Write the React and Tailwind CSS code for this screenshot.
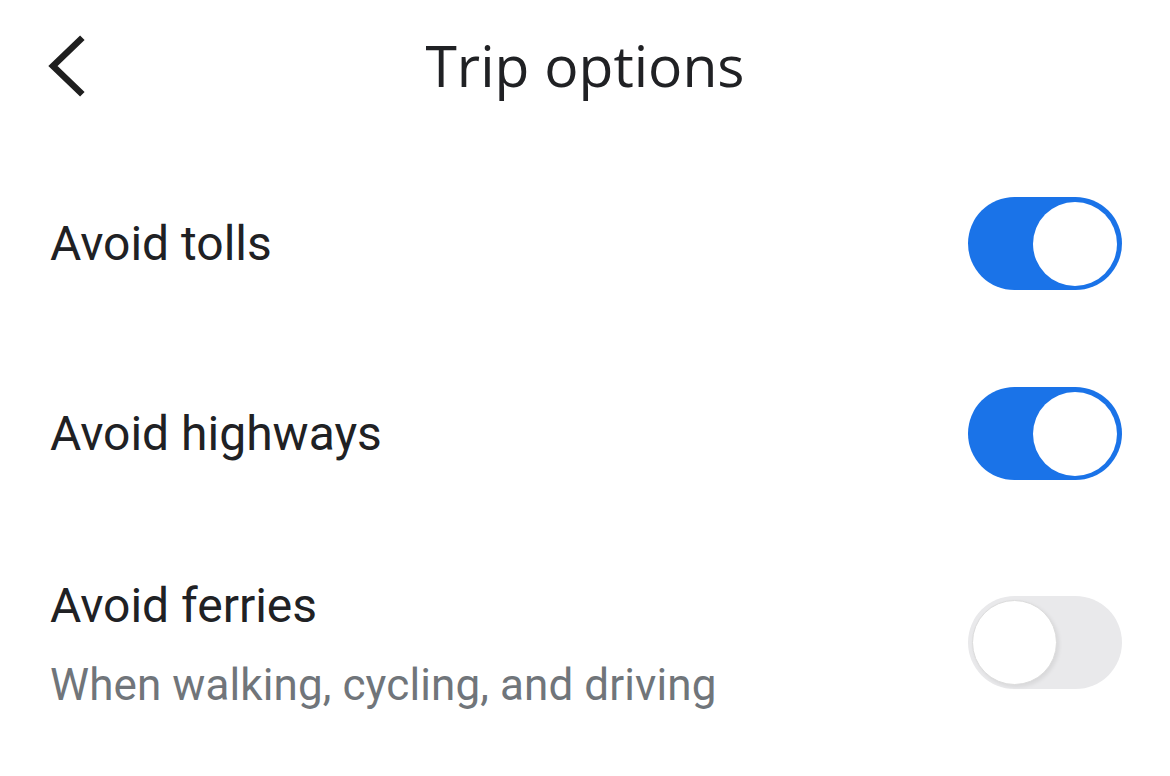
export default function App() {
  const Toggle = ({ on }) =>
    on ? (
      <div className="flex h-[93px] w-[154px] shrink-0 items-center justify-end rounded-full bg-[#1a73e8] pr-[5px]">
        <div className="h-[84px] w-[84px] rounded-full bg-white" />
      </div>
    ) : (
      <div className="flex h-[93px] w-[154px] shrink-0 items-center justify-start rounded-full bg-[#e9e9eb] pl-[4px]">
        <div className="h-[85px] w-[85px] rounded-full border border-[#dcdcdc] bg-white shadow-[2px_2px_4px_rgba(0,0,0,0.08)]" />
      </div>
    );

  return (
    <div className="h-[776px] w-[1170px] bg-white" style={{ fontFamily: "Roboto, 'Noto Sans', sans-serif" }}>
      <div className="grid h-[130px] grid-cols-[1fr_auto_1fr] items-center">
        <div className="pl-[44px] pt-[2px]">
          <svg width="44" height="62" viewBox="0 0 44 62">
            <path d="M36 5 L9 31 L36 57" fill="none" stroke="#1f1f1f" strokeWidth="6.5" strokeLinecap="square" />
          </svg>
        </div>
        <div className="text-[57px] leading-none text-[#202124]" style={{ fontFamily: "'Open Sans', Roboto, sans-serif" }}>
          Trip options
        </div>
        <div />
      </div>

      <div className="flex flex-col pl-[50px] pr-[48px]">
        <div className="mt-[67px] flex h-[93px] items-center justify-between">
          <span className="text-[48px] leading-[56px] text-[#202124]">Avoid tolls</span>
          <Toggle on />
        </div>
        <div className="mt-[97px] flex h-[93px] items-center justify-between">
          <span className="text-[48px] leading-[56px] text-[#202124]">Avoid highways</span>
          <Toggle on />
        </div>
        <div className="mt-[98px] flex items-start justify-between">
          <div className="flex flex-col">
            <span className="text-[48px] leading-[56px] text-[#202124]">Avoid ferries</span>
            <span className="mt-[23px] text-[44px] leading-[56px] tracking-[0.1px] text-[#70757a]">When walking, cycling, and driving</span>
          </div>
          <div className="mt-[18px]">
            <Toggle />
          </div>
        </div>
      </div>
    </div>
  );
}
